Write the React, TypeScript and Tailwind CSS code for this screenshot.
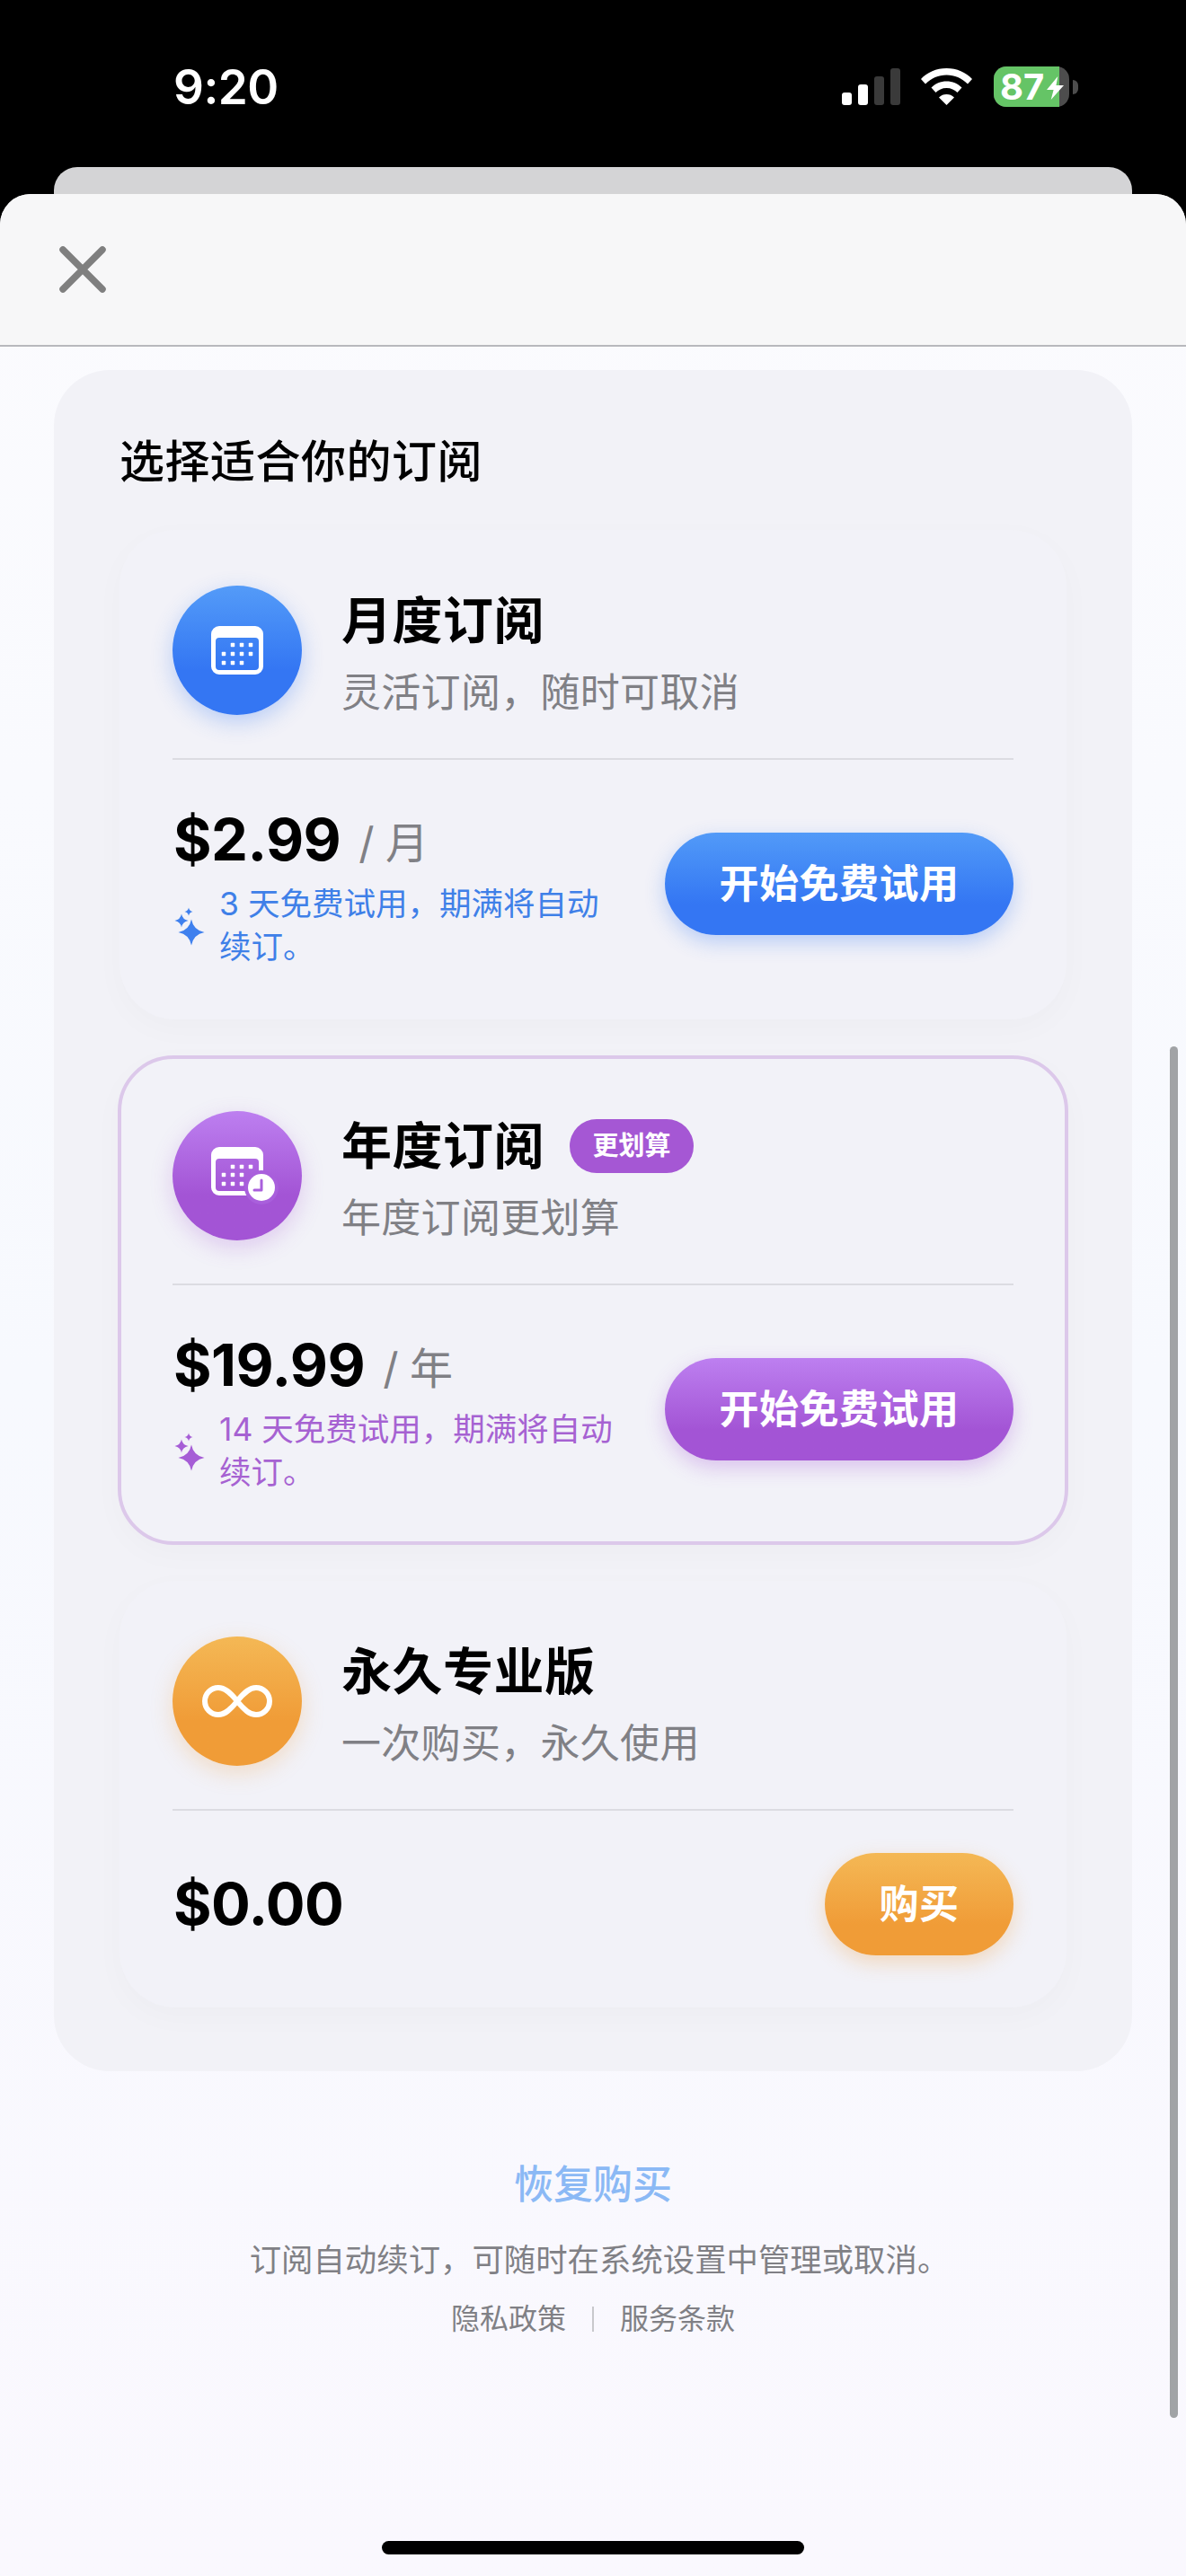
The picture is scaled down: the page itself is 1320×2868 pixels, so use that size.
const font = "font-['Inter','Noto_Sans_CJK_SC',sans-serif]";

function CalendarIcon({ clock }: { clock?: boolean }) {
  const dots = clock
    ? [
        [24, 22],
        [34, 22],
        [44, 22],
        [14, 31],
        [24, 31],
        [34, 31],
        [14, 41],
        [24, 41],
        [34, 41],
      ]
    : [
        [24, 21],
        [34, 21],
        [44, 21],
        [14, 31],
        [24, 31],
        [34, 31],
        [44, 31],
        [14, 41],
        [24, 41],
        [34, 41],
      ];
  return (
    <svg width="58" height="54" viewBox="0 0 58 54" fill="none" className="overflow-visible">
      <path
        fillRule="evenodd"
        clipRule="evenodd"
        fill="#fff"
        d="M9 0h40a9 9 0 0 1 9 9v36a9 9 0 0 1-9 9H9a9 9 0 0 1-9-9V9a9 9 0 0 1 9-9ZM9 13a4 4 0 0 0-4 4v28a4 4 0 0 0 4 4h40a4 4 0 0 0 4-4V17a4 4 0 0 0-4-4Z"
      />
      {dots.map(([x, y]) => (
        <rect key={`${x}-${y}`} x={x - 2.25} y={y - 2.25} width="4.5" height="4.5" rx="0.8" fill="#fff" />
      ))}
      {clock && (
        <>
          <circle cx="56" cy="45" r="19" fill="#a95fdc" />
          <circle cx="56" cy="45" r="15" fill="#fff" />
          <path d="M56 37v11h-8" stroke="#a95fdc" strokeWidth="3" strokeLinecap="round" strokeLinejoin="round" />
        </>
      )}
    </svg>
  );
}

function InfinityIcon() {
  return (
    <svg width="78" height="38" viewBox="0 0 78 38" fill="none" stroke="#fff" strokeWidth="6">
      <path d="M39 19C31 9 25 4 18 4a15 15 0 0 0 0 30c7 0 13-5 21-15s14-15 21-15a15 15 0 0 1 0 30c-7 0-13-5-21-15Z" />
    </svg>
  );
}

function Sparkle({ color }: { color: string }) {
  const star = (cx: number, cy: number, r: number) => {
    const k = r * 0.16;
    return `M${cx} ${cy - r}Q${cx + k} ${cy - k} ${cx + r} ${cy}Q${cx + k} ${cy + k} ${cx} ${cy + r}Q${cx - k} ${cy + k} ${cx - r} ${cy}Q${cx - k} ${cy - k} ${cx} ${cy - r}Z`;
  };
  return (
    <svg width="36" height="48" viewBox="0 0 36 48" fill={color} className="shrink-0">
      <path d={star(20, 31, 14.5)} />
      <path d={star(9, 18, 7.5)} />
      <path d={star(17, 8, 4.5)} />
    </svg>
  );
}

type Plan = {
  name: string;
  sub: string;
  price: string;
  unit?: string;
  note?: string;
  cta: string;
  badge?: string;
  featured?: boolean;
  icon: React.ReactNode;
  iconClass: string;
  ctaClass: string;
  noteClass: string;
  noteColor: string;
};

const plans: Plan[] = [
  {
    name: '月度订阅',
    sub: '灵活订阅，随时可取消',
    price: '$2.99',
    unit: '月',
    note: '3 天免费试用，期满将自动续订。',
    cta: '开始免费试用',
    icon: <CalendarIcon />,
    iconClass: 'from-[#549bf8] to-[#3476f3] shadow-[0_8px_24px_rgba(52,118,243,0.3)]',
    ctaClass: 'w-[388px] from-[#529af8] to-[#3476f3] shadow-[0_8px_22px_rgba(52,118,243,0.3)]',
    noteClass: 'text-[#3f80e8]',
    noteColor: '#3f80ee',
  },
  {
    name: '年度订阅',
    sub: '年度订阅更划算',
    price: '$19.99',
    unit: '年',
    note: '14 天免费试用，期满将自动续订。',
    cta: '开始免费试用',
    badge: '更划算',
    featured: true,
    icon: <CalendarIcon clock />,
    iconClass: 'from-[#bd7ff0] to-[#a354d5] shadow-[0_8px_24px_rgba(163,84,213,0.25)]',
    ctaClass: 'w-[388px] from-[#bd7ff0] to-[#a354d5] shadow-[0_8px_22px_rgba(163,84,213,0.3)]',
    noteClass: 'text-[#a662d2]',
    noteColor: '#a65dd6',
  },
  {
    name: '永久专业版',
    sub: '一次购买，永久使用',
    price: '$0.00',
    cta: '购买',
    icon: <InfinityIcon />,
    iconClass: 'from-[#f4b855] to-[#f09c37] shadow-[0_8px_24px_rgba(240,156,55,0.25)]',
    ctaClass: 'w-[210px] from-[#f4b855] to-[#f09c37] shadow-[0_8px_22px_rgba(240,156,55,0.3)]',
    noteClass: '',
    noteColor: '',
  },
];

function PlanCard({ plan }: { plan: Plan }) {
  return (
    <div
      className={`rounded-[62px] border-[4px] bg-[#f2f2f8] pt-[58px] shadow-[0_10px_36px_rgba(0,0,0,0.025)] ${
        plan.featured ? '-mx-[2px] border-[#dcc8ea] px-[57px]' : 'border-transparent px-[55px]'
      }`}
    >
      <div className="flex h-[144px] items-center gap-[44px]">
        <div
          className={`flex h-[144px] w-[144px] shrink-0 items-center justify-center rounded-full bg-linear-to-b to-65% ${plan.iconClass}`}
        >
          <span className={plan.featured ? '-translate-y-[5px]' : ''}>{plan.icon}</span>
        </div>
        <div className="mt-[8px]">
          <div className="flex items-center gap-[28px]">
            <h2 className="text-[56px] leading-[70px] font-bold tracking-[0.5px] text-black">{plan.name}</h2>
            {plan.badge && (
              <span className="flex h-[60px] w-[138px] items-center justify-center rounded-full bg-[#a557d4] text-[29px] font-bold text-white">
                {plan.badge}
              </span>
            )}
          </div>
          <p className="mt-[15px] text-[44px] leading-[60px] tracking-[0.3px] text-[#808085]">{plan.sub}</p>
        </div>
      </div>
      <div className="mt-[48px] h-[2px] bg-[#dcdce2]" />
      {plan.note ? (
        <div className="mb-[57px] flex h-[228px] items-center justify-between pt-[48px]">
          <div className="pl-[1px]">
            <p className="flex h-[90px] items-center text-[65px] font-bold tracking-[-0.5px] text-black">
              {plan.price}
              <span className="ml-[20px] mt-[8px] text-[48px] font-normal text-[#808085]">/ {plan.unit}</span>
            </p>
            <div className="mt-[3px] flex items-center">
              <Sparkle color={plan.noteColor} />
              <p className={`ml-[15px] w-[456px] text-[35.5px] leading-[48px] ${plan.noteClass}`}>{plan.note}</p>
            </div>
          </div>
          <Cta plan={plan} />
        </div>
      ) : (
        <div className="mb-[54px] flex items-center justify-between pt-[47px]">
          <p className="pl-[1px] text-[65px] font-bold tracking-[-0.5px] text-black">{plan.price}</p>
          <Cta plan={plan} />
        </div>
      )}
    </div>
  );
}

function Cta({ plan }: { plan: Plan }) {
  return (
    <button
      className={`h-[114px] shrink-0 rounded-full bg-linear-to-b to-70% text-[44px] font-semibold tracking-[0.5px] text-white ${plan.ctaClass}`}
    >
      {plan.cta}
    </button>
  );
}

function StatusBar() {
  return (
    <div className="flex h-[186px] items-start justify-between pl-[193px] pr-[120px] pt-[64px]">
      <span className="text-[53px] leading-[66px] font-semibold tracking-[-0.5px] text-white">9:20</span>
      <div className="flex items-center pt-[10px]">
        <div className="flex h-[41px] items-end gap-[7px]">
          <span className="h-[14px] w-[11px] rounded-[3px] bg-white" />
          <span className="h-[23px] w-[11px] rounded-[3px] bg-white" />
          <span className="h-[32px] w-[11px] rounded-[3px] bg-[#3a3a3a]" />
          <span className="h-[41px] w-[11px] rounded-[3px] bg-[#3a3a3a]" />
        </div>
        <svg className="ml-[23px]" width="57" height="41" viewBox="0 0 57 41" fill="#fff">
          <path d="M28.5 0C40 0 50 4.5 57 12l-5 5.5C45.500 11 37.500 7.500 28.500 7.500S11.500 11 5 17.500L0 12C7 4.500 17 0 28.500 0Z" />
          <path d="M28.500 14.500c6.500 0 12.500 2.500 17 7l-5 5.500c-3-3-7-5-12-5s-9 2-12 5l-5-5.500c4.500-4.500 10.500-7 17-7Z" />
          <path d="M28.500 29c3.500 0 6 1 8.500 3.500L28.500 41 20 32.500C22.500 30 25 29 28.500 29Z" />
        </svg>
        <div className="relative ml-[24px] flex h-[45px] w-[84px] rounded-[14px] bg-[#4d4d4d]">
          <div className="h-full w-[73px] rounded-l-[14px] bg-[#65c466]" />
          <span className="absolute left-[7px] top-0 text-[40px] leading-[45px] font-bold text-white">87</span>
          <svg className="absolute left-[59px] top-[11px]" width="19" height="26" viewBox="0 0 20 31" fill="#fff" preserveAspectRatio="none">
            <path d="M13 0 0 18h8l-3 13L20 12h-9l2-12Z" />
          </svg>
        </div>
        <span className="ml-[4px] h-[16px] w-[6px] rounded-r-full bg-[#4d4d4d]" />
      </div>
    </div>
  );
}

export default function App() {
  return (
    <div className={`relative flex h-[2868px] w-[1320px] flex-col overflow-hidden bg-black ${font}`}>
      <StatusBar />
      <div className="mx-[60px] h-[30px] shrink-0 rounded-t-[26px] bg-[#d4d4d6]" />
      <div className="flex flex-1 flex-col rounded-t-[34px] bg-linear-to-b from-[#fbfbfe] via-[#f7f9fe] to-[#faf8fe]">
        <header className="flex h-[170px] shrink-0 items-center rounded-t-[34px] border-b-2 border-[#b8b9bd] bg-[#f7f7f8] pl-[65px]">
          <svg width="54" height="54" viewBox="0 0 54 54" fill="none" stroke="#7f7f7f" strokeWidth="7.500" strokeLinecap="round">
            <path d="M5 5l44 44M49 5 5 49" />
          </svg>
        </header>
        <main className="mx-[60px] mt-[26px] rounded-[62px] bg-[#f2f2f7] px-[73px] pb-[71px] pt-[66px]">
          <h1 className="mb-[40px] text-[50px] leading-[72px] font-medium tracking-[0.5px] text-black">选择适合你的订阅</h1>
          <div className="flex flex-col gap-[40px]">
            {plans.map((plan) => (
              <PlanCard key={plan.name} plan={plan} />
            ))}
          </div>
        </main>
        <footer className="mt-[96px] flex flex-col items-center">
          <button className="text-[44px] leading-[60px] font-medium text-[#8bb9f5]">恢复购买</button>
          <p className="mt-[30px] pl-[14px] text-[35.4px] leading-[50px] text-[#808085]">订阅自动续订，可随时在系统设置中管理或取消。</p>
          <div className="mt-[18px] flex items-center text-[32px] leading-[44px] text-[#808085]">
            <span>隐私政策</span>
            <span className="mx-[29px] h-[28px] w-[2px] bg-[#c8c8cc]" />
            <span>服务条款</span>
          </div>
        </footer>
      </div>
      {/* scroll indicator and home bar float over the sheet */}
      <div className="absolute left-[1302px] top-[1165px] h-[1527px] w-[9px] rounded-full bg-[#a1a3a6]" />
      <div className="absolute bottom-[24px] left-[425px] h-[15px] w-[470px] rounded-full bg-black" />
    </div>
  );
}
